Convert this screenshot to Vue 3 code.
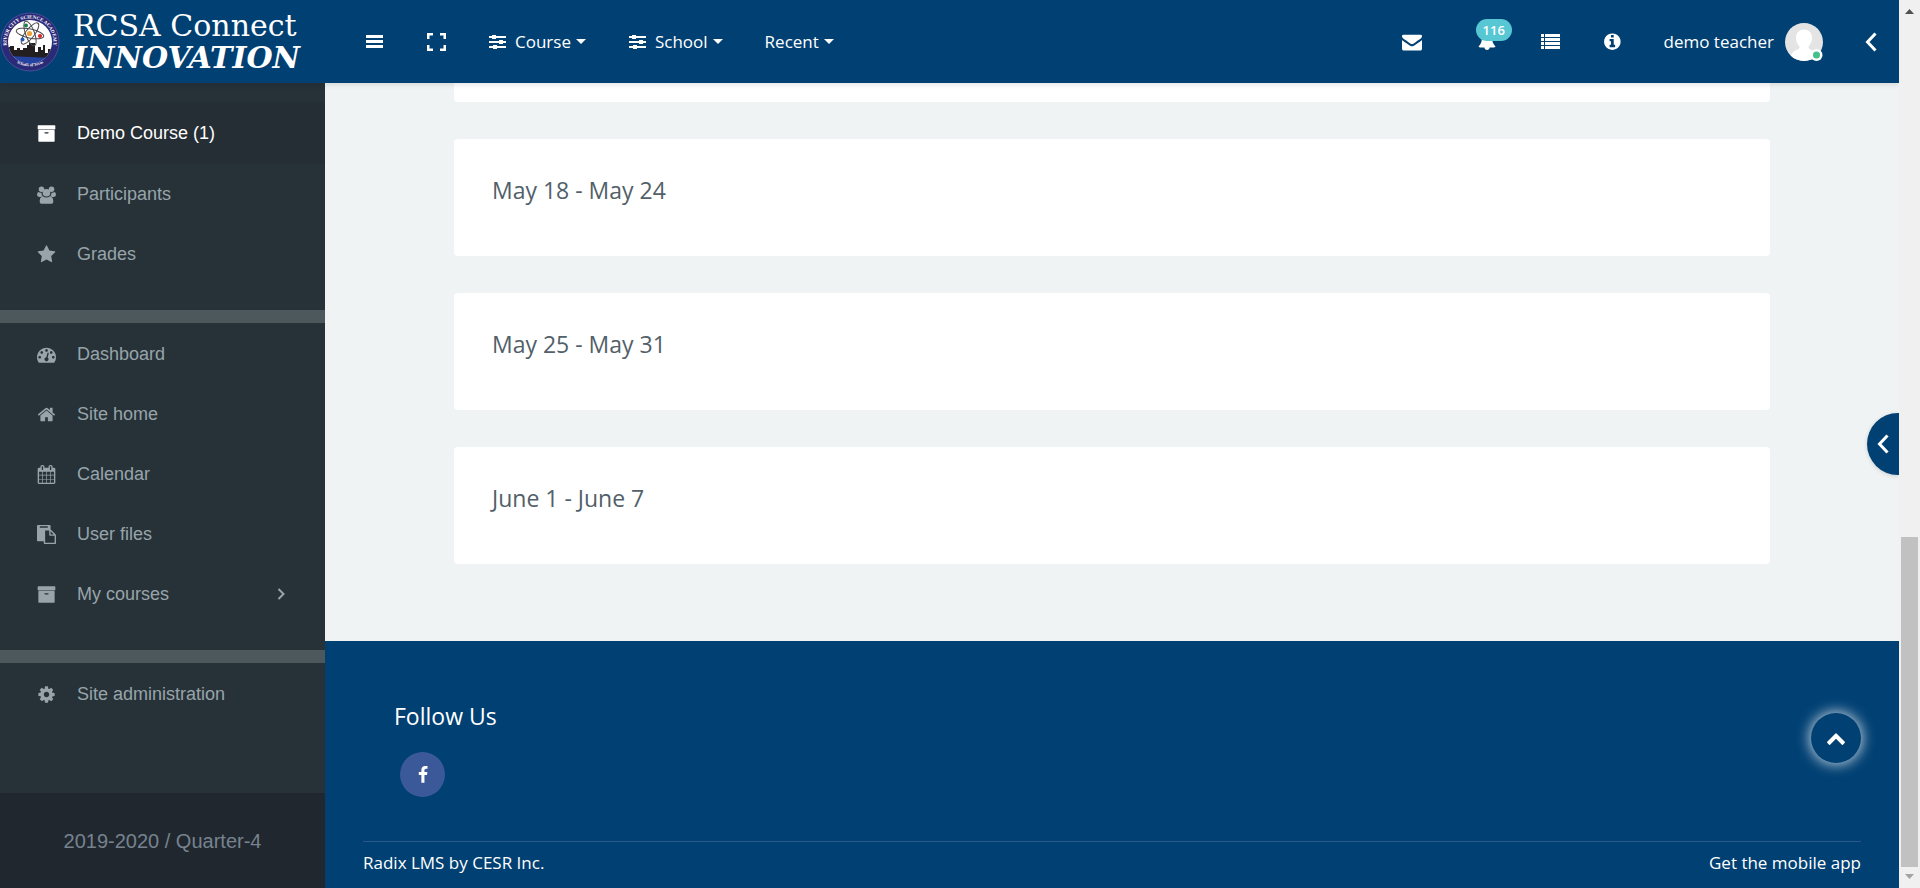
<script setup>
const icons = {
  archive: 'M1088 832q0-26-19-45t-45-19h-256q-26 0-45 19t-19 45 19 45 45 19h256q26 0 45-19t19-45zm576-192v960q0 26-19 45t-45 19h-1408q-26 0-45-19t-19-45v-960q0-26 19-45t45-19h1408q26 0 45 19t19 45zm64-448v256q0 26-19 45t-45 19h-1536q-26 0-45-19t-19-45v-256q0-26 19-45t45-19h1536q26 0 45 19t19 45z',
  star: 'M1728 647q0 22-26 48l-363 354 86 500q1 7 1 20 0 21-10.500 35.500t-30.500 14.500q-19 0-40-12l-449-236-449 236q-22 12-40 12-21 0-31.500-14.500t-10.500-35.500q0-6 2-20l86-500-364-354q-25-27-25-48 0-37 56-46l502-73 225-455q19-41 49-41t49 41l225 455 502 73q56 9 56 46z',
  gauge: 'M384 1152q0-53-37.500-90.500t-90.500-37.500-90.500 37.500-37.500 90.500 37.500 90.500 90.500 37.500 90.500-37.500 37.500-90.500zm192-448q0-53-37.500-90.500t-90.500-37.500-90.500 37.500-37.500 90.500 37.500 90.500 90.500 37.500 90.500-37.500 37.500-90.500zm428 481l101-382q6-26-7.500-48.500t-38.500-29.500-48 6.500-30 39.500l-101 382q-60 5-107 43.500t-63 98.500q-20 77 20 146t117 89 146-20 89-117q16-60-6-117t-72-91zm660-33q0-53-37.500-90.500t-90.500-37.500-90.500 37.500-37.500 90.500 37.500 90.500 90.500 37.500 90.500-37.500 37.500-90.500zm-640-640q0-53-37.500-90.500t-90.500-37.500-90.500 37.500-37.500 90.500 37.500 90.500 90.500 37.500 90.500-37.500 37.500-90.500zm448 192q0-53-37.500-90.500t-90.500-37.500-90.500 37.500-37.500 90.500 37.500 90.500 90.500 37.500 90.500-37.500 37.500-90.500zm320 448q0 261-141 483-19 29-54 29h-1402q-35 0-54-29-141-221-141-483 0-182 71-348t191-286 286-191 348-71 348 71 286 191 191 286 71 348z',
  home: 'M1472 992v480q0 26-19 45t-45 19h-384v-384h-256v384h-384q-26 0-45-19t-19-45v-480q0-1 .5-3t.5-3l575-474 575 474q1 2 1 6zm223-69l-62 74q-8 9-21 11h-3q-13 0-21-7l-692-577-692 577q-12 8-24 7-13-2-21-11l-62-74q-8-10-7-23.500t11-21.500l719-599q32-26 76-26t76 26l244 204v-195q0-14 9-23t23-9h192q14 0 23 9t9 23v408l219 182q10 8 11 21.500t-7 23.500z',
  calendar: 'M192 1664h288v-288h-288v288zm352 0h320v-288h-320v288zm-352-352h288v-320h-288v320zm352 0h320v-320h-320v320zm-352-384h288v-288h-288v288zm736 736h320v-288h-320v288zm-384-736h320v-288h-320v288zm768 736h288v-288h-288v288zm-384-352h320v-320h-320v320zm-352-864v-288q0-13-9.500-22.500t-22.500-9.500h-64q-13 0-22.500 9.500t-9.500 22.500v288q0 13 9.500 22.500t22.500 9.500h64q13 0 22.500-9.500t9.500-22.500zm736 864h288v-320h-288v320zm-384-384h320v-288h-320v288zm384 0h288v-288h-288v288zm32-480v-288q0-13-9.500-22.500t-22.500-9.500h-64q-13 0-22.500 9.500t-9.500 22.500v288q0 13 9.500 22.500t22.500 9.500h64q13 0 22.500-9.500t9.500-22.500zm384-64v1280q0 52-38 90t-90 38h-1408q-52 0-90-38t-38-90v-1280q0-52 38-90t90-38h128v-96q0-66 47-113t113-47h64q66 0 113 47t47 113v96h384v-96q0-66 47-113t113-47h64q66 0 113 47t47 113v96h128q52 0 90 38t38 90z',
  files: 'M768 1664h896v-640h-416q-40 0-68-28t-28-68v-416h-384v1152zm256-1440v-64q0-13-9.500-22.500t-22.500-9.500h-704q-13 0-22.500 9.500t-9.500 22.500v64q0 13 9.500 22.500t22.500 9.500h704q13 0 22.500-9.500t9.500-22.500zm256 672h299l-299-299v299zm512 128v672q0 40-28 68t-68 28h-960q-40 0-68-28t-28-68v-160h-544q-40 0-68-28t-28-68v-1344q0-40 28-68t68-28h1088q40 0 68 28t28 68v328q21 13 36 28l408 408q28 28 48 76t20 88z',
  cog: 'M1152 896q0-106-75-181t-181-75-181 75-75 181 75 181 181 75 181-75 75-181zm512-109v222q0 12-8 23t-20 13l-185 28q-19 54-39 91 35 50 107 138 10 12 10 25t-9 23q-27 37-99 108t-94 71q-12 0-26-9l-138-108q-44 23-91 38-16 136-29 186-7 28-36 28h-222q-14 0-24.500-8.500t-11.500-21.500l-28-184q-49-16-90-37l-141 107q-10 9-25 9-14 0-25-11-126-114-165-168-7-10-7-23 0-12 8-23 15-21 51-66.500t54-70.500q-27-50-41-99l-183-27q-13-2-21-12.500t-8-23.500v-222q0-12 8-23t19-13l186-28q14-46 39-92-40-57-107-138-10-12-10-24 0-10 9-23 26-36 98.500-107.500t94.500-71.500q13 0 26 10l138 107q44-23 91-38 16-136 29-186 7-28 36-28h222q14 0 24.500 8.500t11.500 21.500l28 184q49 16 90 37l142-107q9-9 24-9 13 0 25 10 129 119 165 170 7 8 7 22 0 12-8 23-15 21-51 66.500t-54 70.500q26 50 41 98l183 28q13 2 21 12.500t8 23.500z',
  users: 'M160 400a260 260 0 1 1 520 0a260 260 0 1 1 -520 0zM1112 400a260 260 0 1 1 520 0a260 260 0 1 1 -520 0zM536 730a360 360 0 1 1 720 0a360 360 0 1 1 -720 0zM440 1110q60-30 100-80q150 160 356 160t356-160q40 50 100 80q190 90 190 430q0 240-230 240h-832q-230 0-230-240q0-340 190-430zM130 660q120 80 290 60q0 190 100 300q-80 100-180 100h-140q-200 0-200-200q0-200 130-260zM1662 660q-120 80-290 60q0 190-100 300q80 100 180 100h140q200 0 200-200q0-200-130-260z',
  mail: 'M1792 710v794q0 66-47 113t-113 47h-1472q-66 0-113-47t-47-113v-794q44 49 101 87 362 246 497 345 57 42 92.500 65.500t94.500 48 110 24.500h2q51 0 110-24.500t94.500-48 92.500-65.500q170-123 498-345 57-39 100-87zm0-354q0 79-49 151t-122 123q-376 261-468 325-10 7-42.500 30.500t-54 38-52 32.500-57.500 27-50 9h-2q-23 0-50-9t-57.500-27-52-32.500-54-38-42.500-30.500q-91-64-262-182.500t-205-142.500q-62-42-117-115.500t-55-136.500q0-78 41.500-100t118.500-22h1472q65 0 112.500 22t47.500 78z',
  bell: 'M1728 1408q0 52-38 90t-90 38h-448q0 106-75 181t-181 75-181-75-75-181h-448q-52 0-90-38t-38-90q50-42 91-88t85-119.500 74.500-158.500 50-206 19.500-260q0-152 117-282.500t307-158.500q-8-19-8-39 0-40 28-68t68-28 68 28 28 68q0 20-8 39 190 28 307 158.500t117 282.500q0 139 19.500 260t50 206 74.500 158.500 85 119.500 91 88z',
  info: 'M1152 1376v-160q0-14-9-23t-23-9h-96v-512q0-14-9-23t-23-9h-320q-14 0-23 9t-9 23v160q0 14 9 23t23 9h96v320h-96q-14 0-23 9t-9 23v160q0 14 9 23t23 9h448q14 0 23-9t9-23zm-128-896v-160q0-14-9-23t-23-9h-192q-14 0-23 9t-9 23v160q0 14 9 23t23 9h192q14 0 23-9t9-23zm640 416q0 209-103 385.500t-279.500 279.500-385.500 103-385.500-103-279.500-279.500-103-385.500 103-385.500 279.500-279.500 385.500-103 385.500 103 279.500 279.500 103 385.500z',
  facebook: 'M1343 12v264h-157q-86 0-116 36t-30 108v189h293l-39 296h-254v759h-306v-759h-255v-296h255v-218q0-186 104-288.500t277-102.500q147 0 228 12z',
  up: 'M1683 1331l-166 165q-19 19-45 19t-45-19l-531-531-531 531q-19 19-45 19t-45-19l-166-165q-19-19-19-45.500t19-45.500l742-741q19-19 45-19t45 19l742 741q19 19 19 45.500t-19 45.500z'
}

const menus = [
  { label: 'Course', sliders: true },
  { label: 'School', sliders: true },
  { label: 'Recent', sliders: false }
]

const groups = [
  [
    { label: 'Demo Course (1)', icon: 'archive', active: true },
    { label: 'Participants', icon: 'users' },
    { label: 'Grades', icon: 'star' }
  ],
  [
    { label: 'Dashboard', icon: 'gauge' },
    { label: 'Site home', icon: 'home' },
    { label: 'Calendar', icon: 'calendar' },
    { label: 'User files', icon: 'files' },
    { label: 'My courses', icon: 'archive', more: true }
  ],
  [{ label: 'Site administration', icon: 'cog' }]
]

const weeks = ['May 18 - May 24', 'May 25 - May 31', 'June 1 - June 7']
</script>

<template>
  <div class="page">
    <header class="topbar">
      <a class="brand" href="#">
        <svg class="seal" viewBox="0 0 60 60" aria-hidden="true">
          <defs>
            <path id="seal-top" d="M9.500 41.500A23.500 23.500 0 1 1 50.500 41.500" />
            <path id="seal-bottom" d="M9 44A26.500 26.500 0 0 0 51 44" />
            <clipPath id="seal-disc"><circle cx="30" cy="30" r="22" /></clipPath>
          </defs>
          <circle cx="30" cy="30" r="29" fill="#2b2a78" stroke="#45509a" stroke-width="1" />
          <circle cx="30" cy="30" r="22" fill="#fff" />
          <g clip-path="url(#seal-disc)">
            <rect x="6" y="43" width="48" height="14" fill="#2443a0" />
            <path d="M6 44V35h4v-1h4v4h3v-2h3v2h3v-2h4v-3h2v-2h6v9h3v-5h3v3h2v-5h2v8h3v-4h6v9z" fill="#231f20" />
          </g>
          <g fill="none" stroke="#4b4b4d" stroke-width="1">
            <ellipse cx="30" cy="21.500" rx="14" ry="4.500" transform="rotate(12 30 21.500)" />
            <ellipse cx="30" cy="21.500" rx="13" ry="4.500" transform="rotate(70 30 21.500)" />
            <ellipse cx="30" cy="21.500" rx="13" ry="4.500" transform="rotate(128 30 21.500)" />
          </g>
          <circle cx="29.500" cy="21.500" r="2.600" fill="#f0a23a" />
          <circle cx="26" cy="13.500" r="2" fill="#1c7f45" />
          <circle cx="40" cy="24" r="2.100" fill="#e0262e" />
          <circle cx="22.500" cy="27.500" r="2" fill="#2557b8" />
          <text class="seal-name"><textPath href="#seal-top" startOffset="50%" text-anchor="middle">RIVER CITY SCIENCE ACADEMY</textPath></text>
          <text class="seal-place"><textPath href="#seal-bottom" startOffset="50%" text-anchor="middle">Schools of Texas</textPath></text>
        </svg>
        <span class="wordmark">
          <span>RCSA Connect</span>
          <strong>INNOVATION</strong>
        </span>
      </a>

      <nav class="menu" aria-label="Main">
        <button type="button" aria-label="Toggle menu">
          <svg class="icon" viewBox="0 0 20 20"><path d="M2 3h17v3H2zM2 8h17v3H2zM2 13h17v3H2z" /></svg>
        </button>
        <button type="button" aria-label="Full screen">
          <svg class="icon" viewBox="0 0 20 20"><path d="M1 1h6v2.500H3.500V7H1zM14 1h6v6h-2.500V3.500H14zM1 13h2.500v3.500H7V19H1zM17.500 13H20v6h-6v-2.500h3.500z" /></svg>
        </button>
        <button v-for="m in menus" :key="m.label" type="button">
          <svg v-if="m.sliders" class="sliders" viewBox="0 0 18 18">
            <path d="M1 3h17v2H1zM1 8h17v2H1zM1 13h17v2H1z" />
            <path d="M4 2h4v4H4zM11 7h4v4h-4zM5 12h4v4H5z" />
          </svg>
          {{ m.label }}
          <span class="caret"></span>
        </button>
      </nav>

      <div class="tools">
        <button type="button" class="mail" aria-label="Messages">
          <svg class="icon" viewBox="0 0 1792 1792"><path :d="icons.mail" /></svg>
        </button>
        <button type="button" class="alerts" aria-label="Notifications">
          <svg class="icon" viewBox="0 0 1984 1984"><path :d="icons.bell" /></svg>
          <span class="count">116</span>
        </button>
        <button type="button" aria-label="List">
          <svg class="icon" viewBox="0 0 20 20"><path d="M1 2h3v3H1zM5 2h15v3H5zM1 6h3v3H1zM5 6h15v3H5zM1 10h3v3H1zM5 10h15v3H5zM1 14h3v3H1zM5 14h15v3H5z" /></svg>
        </button>
        <button type="button" aria-label="Information">
          <svg class="icon" viewBox="-64 0 1856 1856"><path :d="icons.info" /></svg>
        </button>
        <button type="button" class="user">
          demo teacher
          <svg class="avatar" viewBox="0 0 38 38" aria-hidden="true">
            <defs><clipPath id="face"><circle cx="19" cy="19" r="19" /></clipPath></defs>
            <g clip-path="url(#face)">
              <rect width="38" height="38" fill="#e4e4e4" />
              <path d="M19 6.500c5 0 8 3.500 8 8.500 0 3.800-1.500 6.500-3.500 8.300 0 2 .5 2.700 2.500 3.500 4 1.500 6.500 4 7.500 11.200h-29C5.500 30.800 8 28.300 12 26.800c2-.8 2.500-1.500 2.500-3.500C12.500 21.500 11 18.800 11 15c0-5 3-8.500 8-8.500z" fill="#fff" />
            </g>
            <circle cx="31.500" cy="32" r="6" fill="#fff" />
            <circle cx="31.500" cy="32" r="3.500" fill="#45c08a" />
          </svg>
        </button>
        <button type="button" aria-label="Open panel">
          <svg class="chevron" viewBox="0 0 12 20"><path d="M10.500 1.500L2.500 10l8 8.500" /></svg>
        </button>
      </div>
    </header>

    <aside class="sidebar">
      <nav aria-label="Course">
        <ul v-for="(group, i) in groups" :key="i" class="group">
          <li v-for="item in group" :key="item.label">
            <a href="#" :class="{ active: item.active }">
              <svg class="side-icon" viewBox="0 0 1792 1792" aria-hidden="true"><path :d="icons[item.icon]" /></svg>
              <span class="label">{{ item.label }}</span>
              <svg v-if="item.more" class="more" viewBox="0 0 8 12" aria-hidden="true"><path d="M1.500 1l5 5-5 5" /></svg>
            </a>
          </li>
        </ul>
      </nav>
      <p class="term">2019-2020 / Quarter-4</p>
    </aside>

    <main class="content">
      <div class="weeks">
        <section class="card previous"></section>
        <section v-for="w in weeks" :key="w" class="card"><h3>{{ w }}</h3></section>
      </div>
      <footer class="footer">
        <div class="follow">
          <h3>Follow Us</h3>
          <a class="facebook" href="#" aria-label="Facebook">
            <svg viewBox="0 0 1792 1792"><path :d="icons.facebook" /></svg>
          </a>
        </div>
        <div class="legal">
          <a href="#">Radix LMS by CESR Inc.</a>
          <a href="#">Get the mobile app</a>
        </div>
        <button type="button" class="to-top" aria-label="Back to top">
          <svg viewBox="0 0 1792 1792"><path :d="icons.up" /></svg>
        </button>
      </footer>
      <button type="button" class="drawer" aria-label="Open drawer">
        <svg class="chevron" viewBox="0 0 12 20"><path d="M10.500 1.500L2.500 10l8 8.500" /></svg>
      </button>
    </main>

    <div class="scrollbar" aria-hidden="true">
      <svg viewBox="0 0 9 5"><path d="M0 5l4.500-5L9 5z" fill="#505050" /></svg>
      <div class="track"><div class="thumb"></div></div>
      <svg viewBox="0 0 9 5"><path d="M0 0l4.500 5L9 0z" fill="#a3a3a3" /></svg>
    </div>
  </div>
</template>

<style>
body {
  margin: 0;
  overflow: hidden;
}
</style>

<style scoped>
* {
  box-sizing: border-box;
}
.page {
  display: grid;
  grid-template-columns: 325px minmax(0, 1fr) 21px;
  grid-template-rows: 83px minmax(0, 1fr);
  height: 100vh;
  font-family: "Open Sans", "Noto Sans", sans-serif;
  font-size: 17px;
  color: #fff;
  background: #eff3f4;
}
button {
  display: flex;
  align-items: center;
  padding: 0;
  border: 0;
  background: none;
  color: inherit;
  font: inherit;
  white-space: nowrap;
}
a {
  color: inherit;
  text-decoration: none;
}
svg {
  display: block;
  flex: none;
  fill: currentColor;
}
h3 {
  margin: 0;
  font-size: 23px;
  font-weight: 400;
  line-height: 30px;
}

/* Top bar */
.topbar {
  grid-column: 1 / 3;
  z-index: 2;
  display: flex;
  align-items: center;
  padding-right: 22px;
  background: #004073;
  box-shadow: 0 2px 5px rgba(0, 0, 0, 0.1);
}
.brand {
  display: flex;
  align-items: center;
  gap: 13px;
  width: 364px;
}
.seal {
  width: 60px;
  height: 60px;
}
.seal-name,
.seal-place {
  fill: #fff;
  font-family: "Liberation Serif", serif;
  font-weight: 700;
}
.seal-name {
  font-size: 5px;
}
.seal-place {
  font-size: 4px;
}
.wordmark {
  display: flex;
  flex-direction: column;
  font-family: "DejaVu Serif", serif;
  font-size: 30px;
  line-height: 32px;
  white-space: nowrap;
}
.wordmark strong {
  font-style: italic;
}
.menu {
  display: flex;
  gap: 42px;
}
.icon {
  width: 20px;
  height: 20px;
}
.menu .icon {
  margin: auto;
}
.sliders {
  width: 18px;
  height: 18px;
  margin-right: 9px;
}
.caret {
  margin-left: 5px;
  border: 5px solid transparent;
  border-top-color: #fff;
  border-bottom: 0;
}
.tools {
  display: flex;
  align-items: center;
  gap: 42px;
  margin-left: auto;
}
.mail {
  margin-right: 14px;
}
.alerts {
  position: relative;
}
.count {
  position: absolute;
  left: -2px;
  bottom: 11px;
  padding: 0 7px;
  border-radius: 11px;
  background: #57c7d4;
  font-size: 13px;
  font-weight: 600;
  line-height: 22px;
}
.user {
  gap: 11px;
}
.avatar {
  width: 38px;
  height: 38px;
}
.chevron {
  width: 12px;
  height: 20px;
}
.chevron path,
.more path {
  fill: none;
  stroke: currentColor;
  stroke-width: 3;
}

/* Sidebar */
.sidebar {
  display: flex;
  flex-direction: column;
  background: #263238;
  color: #98a4aa;
  font-family: "Liberation Sans", Arial, sans-serif;
}
.group {
  margin: 0;
  padding: 1px 0 26px;
  list-style: none;
}
.group:first-child {
  padding-top: 19px;
}
.group + .group {
  border-top: 13px solid #4d585d;
}
.group a {
  display: flex;
  align-items: center;
  height: 60px;
  padding: 0 40px 0 37px;
  font-size: 18px;
}
.group a.active {
  height: 62px;
  background: #242e34;
  color: #fff;
}
.side-icon {
  width: 19px;
  height: 19px;
  margin-right: 21px;
}
.label {
  flex: 1;
}
.more {
  width: 8px;
  height: 12px;
}
.more path {
  stroke-width: 2;
}
.term {
  margin: auto 0 0;
  padding: 35px 0 33px;
  background: #21272e;
  color: #76838f;
  font-size: 20px;
  line-height: 27px;
  text-align: center;
}

/* Course content */
.content {
  position: relative;
  display: flex;
  flex-direction: column;
}
.weeks {
  display: flex;
  flex-direction: column;
  gap: 37px;
  padding: 0 129px;
}
.card {
  padding: 36px 38px 51px;
  border-radius: 4px;
  background: #fff;
  color: #526069;
}
.previous {
  padding: 0;
  height: 19px;
  border-radius: 0 0 4px 4px;
}
.footer {
  position: relative;
  margin-top: auto;
  padding: 60px 38px 13px;
  background: #004073;
}
.follow {
  padding: 0 31px 44px;
}
.facebook {
  display: grid;
  place-items: center;
  width: 45px;
  height: 45px;
  margin: 21px 0 0 6px;
  border-radius: 50%;
  background: #3b5998;
}
.facebook svg {
  width: 18px;
  height: 18px;
}
.legal {
  display: flex;
  justify-content: space-between;
  padding-top: 8px;
  border-top: 1px solid #28598a;
  line-height: 25px;
}
.to-top {
  position: absolute;
  top: 72px;
  right: 38px;
  justify-content: center;
  width: 50px;
  height: 50px;
  border-radius: 50%;
  background: #004073;
  box-shadow: 0 0 14px 1px rgba(255, 255, 255, 0.8);
}
.to-top svg {
  width: 20px;
  height: 20px;
}
.drawer {
  position: absolute;
  top: 330px;
  right: 0;
  width: 32px;
  height: 62px;
  padding-left: 10px;
  border-radius: 31px 0 0 31px;
  background: #004073;
  box-shadow: 0 1px 4px rgba(0, 0, 0, 0.15);
}

/* Scrollbar */
.scrollbar {
  grid-column: 3;
  grid-row: 1 / 3;
  z-index: 3;
  display: flex;
  flex-direction: column;
  align-items: center;
  padding: 9px 2px;
  background: #f0f0f0;
}
.scrollbar svg {
  width: 9px;
  height: 5px;
}
.track {
  display: flex;
  flex-direction: column;
  justify-content: flex-end;
  flex: 1;
  align-self: stretch;
  margin: 7px 0;
}
.thumb {
  height: 39%;
  background: #c1c1c1;
}
</style>
